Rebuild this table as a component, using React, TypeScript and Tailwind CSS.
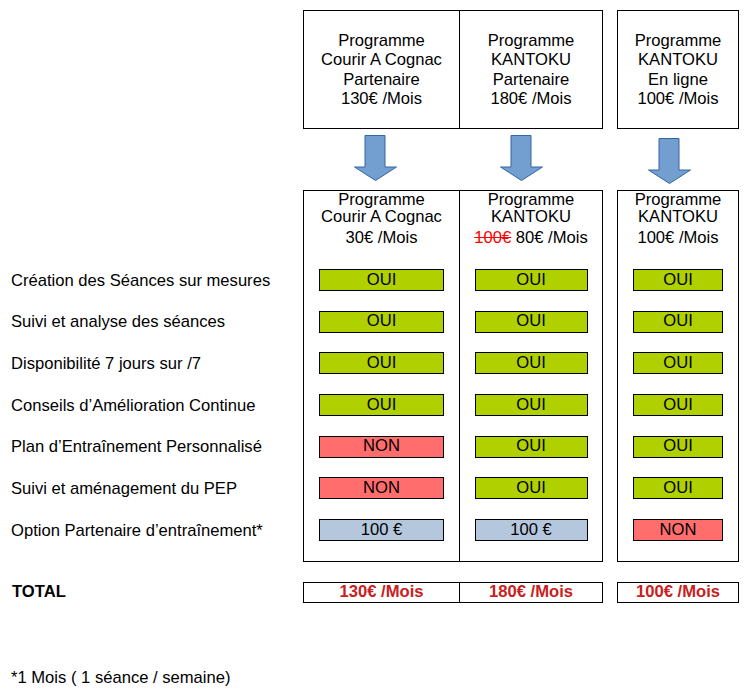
const ROWS = [
  { label: "Création des Séances sur mesures", a: "OUI", b: "OUI", c: "OUI" },
  { label: "Suivi et analyse des séances", a: "OUI", b: "OUI", c: "OUI" },
  { label: "Disponibilité 7 jours sur /7", a: "OUI", b: "OUI", c: "OUI" },
  { label: "Conseils d’Amélioration Continue", a: "OUI", b: "OUI", c: "OUI" },
  { label: "Plan d’Entraînement Personnalisé", a: "NON", b: "OUI", c: "OUI" },
  { label: "Suivi et aménagement du PEP", a: "NON", b: "OUI", c: "OUI" },
  { label: "Option Partenaire d’entraînement*", a: "100 €", b: "100 €", c: "NON" },
];

const TONE: Record<string, string> = {
  OUI: "bg-[#b0d000]",
  NON: "bg-[#ff6d6d]",
  "100 €": "bg-[#b4c7dc]",
};

function Pill({ value, width }: { value: string; width: string }) {
  return (
    <div
      className={`flex h-[22px] items-center justify-center border border-black leading-none ${width} ${
        TONE[value] ?? TONE["100 €"]
      }`}
    >
      {value}
    </div>
  );
}

function Arrow({ className = "" }: { className?: string }) {
  return (
    <svg width="44" height="47" viewBox="0 0 44 47" className={className}>
      <polygon
        points="11,0.5 31,0.5 31,32 42.5,32 21.5,45.5 0.5,32 11,32"
        fill="#729fcf"
        stroke="#3465a4"
        strokeWidth="1"
      />
    </svg>
  );
}

function Column({
  head,
  values,
  pillWidth,
  className,
}: {
  head: React.ReactNode;
  values: string[];
  pillWidth: string;
  className: string;
}) {
  return (
    <div className={`flex flex-col items-center ${className}`}>
      <div className="h-[78px] w-full text-center">{head}</div>
      <div className="flex flex-col gap-[19.67px] pb-[20px]">
        {values.map((v, i) => (
          <Pill key={i} value={v} width={pillWidth} />
        ))}
      </div>
    </div>
  );
}

export default function App() {
  return (
    <div
      className="h-[700px] w-[752px] bg-white pt-[10px] text-[16.6px] text-black"
      style={{ fontFamily: '"Liberation Sans", Arial, sans-serif' }}
    >
      {/* offers */}
      <div className="ml-[303px] flex">
        <div className="flex h-[119px] w-[300px] border border-black">
          <div className="flex w-[156px] items-center justify-center border-r border-black text-center leading-[19.3px]">
            <div>
              Programme
              <br />
              Courir A Cognac
              <br />
              Partenaire
              <br />
              130€ /Mois
            </div>
          </div>
          <div className="flex flex-1 items-center justify-center text-center leading-[19.3px]">
            <div>
              Programme
              <br />
              KANTOKU
              <br />
              Partenaire
              <br />
              180€ /Mois
            </div>
          </div>
        </div>
        <div className="ml-[14px] flex h-[119px] w-[122px] items-center justify-center border border-black text-center leading-[19.3px]">
          <div>
            Programme
            <br />
            KANTOKU
            <br />
            En ligne
            <br />
            100€ /Mois
          </div>
        </div>
      </div>

      {/* arrows */}
      <div className="flex h-[61px] items-start pt-[6px]">
        <Arrow className="ml-[354px]" />
        <Arrow className="ml-[102px]" />
        <Arrow className="ml-[104px] mt-[3px]" />
      </div>

      {/* comparison */}
      <div className="flex">
        <div className="w-[303px] pl-[11px] pt-[79px]">
          <div className="flex flex-col gap-[19.67px]">
            {ROWS.map((r) => (
              <div key={r.label} className="flex h-[22px] items-center pt-[2px]">
                {r.label}
              </div>
            ))}
          </div>
        </div>
        <div className="flex w-[300px] border border-black">
          <Column
            className="w-[156px] border-r border-black"
            pillWidth="w-[125px]"
            values={ROWS.map((r) => r.a)}
            head={
              <div className="leading-[17px]">
                Programme
                <br />
                Courir A Cognac
                <div className="mt-[4px]">30€ /Mois</div>
              </div>
            }
          />
          <Column
            className="flex-1"
            pillWidth="w-[113px]"
            values={ROWS.map((r) => r.b)}
            head={
              <div className="leading-[17px]">
                Programme
                <br />
                KANTOKU
                <div className="mt-[4px]">
                  <span className="text-[#ff0000] line-through decoration-[#ff0000]">100€</span> 80€ /Mois
                </div>
              </div>
            }
          />
        </div>
        <div className="ml-[14px] flex w-[122px] border border-black">
          <Column
            className="flex-1"
            pillWidth="w-[90px]"
            values={ROWS.map((r) => r.c)}
            head={
              <div className="leading-[17px]">
                Programme
                <br />
                KANTOKU
                <div className="mt-[4px]">100€ /Mois</div>
              </div>
            }
          />
        </div>
      </div>

      {/* totals */}
      <div className="mt-[20px] flex h-[21px] items-start">
        <div className="flex h-[21px] w-[303px] items-center pl-[12px] font-bold leading-none">TOTAL</div>
        <div className="flex h-[21px] w-[300px] border border-black font-bold leading-none text-[#c9211e]">
          <div className="flex w-[156px] items-center justify-center border-r border-black">130€ /Mois</div>
          <div className="flex flex-1 items-center justify-center">180€ /Mois</div>
        </div>
        <div className="ml-[14px] flex h-[21px] w-[122px] items-center justify-center border border-black font-bold leading-none text-[#c9211e]">
          100€ /Mois
        </div>
      </div>

      <div className="mt-[63px] pl-[11px] leading-[24px]">*1 Mois ( 1 séance / semaine)</div>
    </div>
  );
}
